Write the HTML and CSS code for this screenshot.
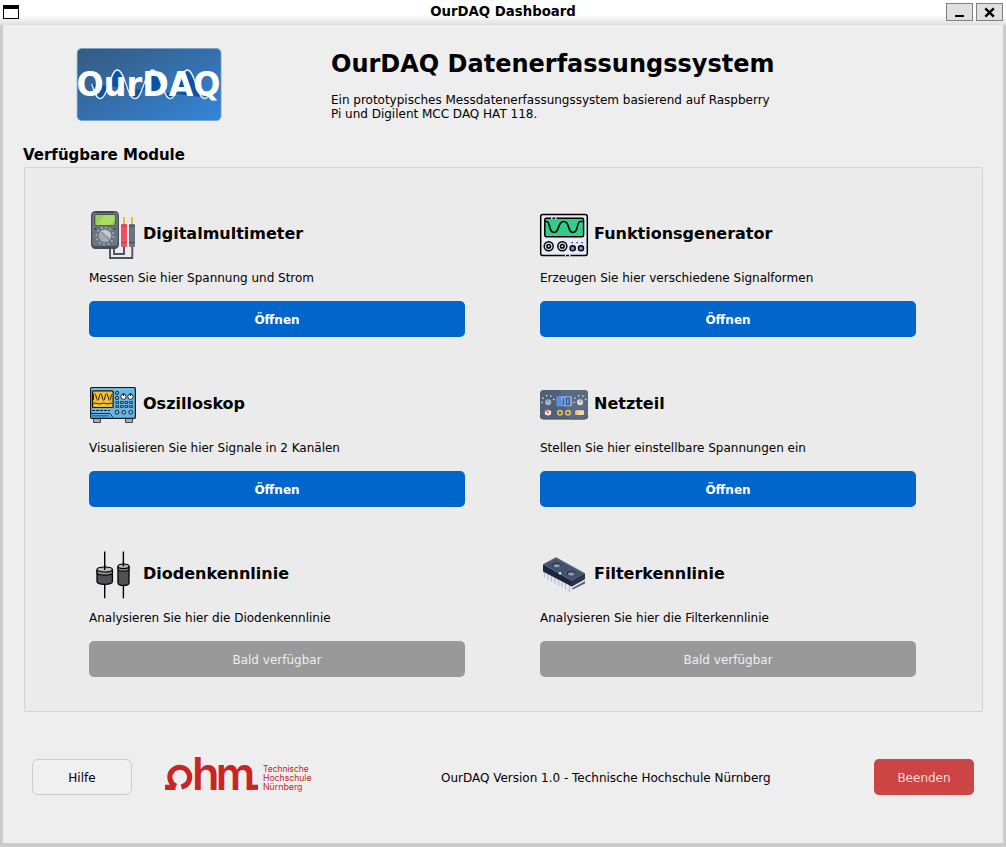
FILE: index.html
```html
<!DOCTYPE html>
<html lang="de">
<head>
<meta charset="utf-8">
<title>OurDAQ Dashboard</title>
<link rel="stylesheet" href="styles.css">
</head>
<body>
<div class="window">
  <header class="titlebar">
    <span class="win-icon"></span>
    <span class="win-title">OurDAQ Dashboard</span>
    <span class="win-controls">
      <button class="win-btn" aria-label="Minimieren"><svg width="25" height="16" viewBox="0 0 25 16"><path d="M8 12h9" stroke="#000" stroke-width="2"/></svg></button>
      <button class="win-btn" aria-label="Schließen"><svg width="25" height="16" viewBox="0 0 25 16"><path d="M8.300 4.300l8.500 8.400M16.800 4.300l-8.500 8.400" stroke="#000" stroke-width="2.400"/></svg></button>
    </span>
  </header>
  <main class="content">
    <section class="intro">
      <svg class="logo" width="145" height="73" viewBox="0 0 145 73">
        <defs><linearGradient id="lg" x1="0" y1="0" x2="1" y2="1"><stop offset="0" stop-color="#345a80"/><stop offset="1" stop-color="#3485d8"/></linearGradient></defs>
        <rect x=".2" y=".5" width="143.800" height="72" rx="4.500" fill="url(#lg)" stroke="#74a0c8" stroke-width=".8"/>
        <path d="M14.700 36C17 42 19 50.700 23 50.700C31 50.700 33 22 40.300 22C48 22 50 50.700 58 50.700C66 50.700 68 22 75.700 22C83 22 86 50.700 93 50.700C101 50.700 103 22 110.300 22C118 22 120 50.700 127.500 50.700L125 49L14.700 36Z" fill="#0a52a3"/>
        <path d="M14.700 36C17 42 19 50.700 23 50.700C31 50.700 33 22 40.300 22C48 22 50 50.700 58 50.700C66 50.700 68 22 75.700 22C83 22 86 50.700 93 50.700C101 50.700 103 22 110.300 22C118 22 120 50.700 127.500 50.700C130 50.700 131 49 132 47" fill="none" stroke="#e3edf6" stroke-width="1.300"/>
        <text class="logo-word" x="-.5" y="47.500" textLength="144" lengthAdjust="spacingAndGlyphs">OurDAQ</text>
      </svg>
      <div class="intro-text">
        <h1>OurDAQ Datenerfassungssystem</h1>
        <p>Ein prototypisches Messdatenerfassungssystem basierend auf Raspberry<br>Pi und Digilent MCC DAQ HAT 118.</p>
      </div>
    </section>
    <h2>Verfügbare Module</h2>
    <section class="modules">
      <article class="module">
        <div class="module-head">
          <svg width="48" height="48" viewBox="0 0 48 48">
            <path d="M21 38v10h22.300V37M25 38v6h10V37" fill="none" stroke="#4b545f" stroke-width="1.900"/>
            <rect x="2" y="1" width="28" height="38" rx="4.500" fill="#464e59"/>
            <rect x="3.200" y="2.500" width="25.600" height="33.500" rx="3" fill="#6b7480"/>
            <rect x="8" y="1.500" width="16" height="1.500" fill="#3d4650"/>
            <rect x="5.500" y="4.200" width="21" height="11.300" rx=".8" fill="#3f4852"/>
            <rect x="6.300" y="5" width="19.400" height="10" fill="#9bcf53"/>
            <path d="M16 5h9.700v6L20 15H8z" fill="#acdc65"/>
            <circle cx="6.500" cy="19" r="1" fill="#363f49"/><circle cx="25.700" cy="19" r="1" fill="#363f49"/>
            <circle cx="16" cy="26" r="8.500" fill="none" stroke="#b0b6bd" stroke-width="1.700" stroke-dasharray="1.700 2.750"/>
            <circle cx="16" cy="26" r="6.200" fill="#a3acb5"/><path d="M11.500 21.700a6.200 6.200 0 0 1 10.300 6z" fill="#c4cacf"/><path d="M12.500 22l7.500 7.700" stroke="#8a949f" stroke-width="1.300"/>
            <path d="M35 7v7M43 7v7" stroke="#ecb942" stroke-width="2"/>
            <rect x="32" y="14" width="6" height="23" rx="1" fill="#ee5262"/><path d="M32 16h6M32 32.500h6" stroke="#c83c51" stroke-width="1.200"/>
            <rect x="40" y="14" width="6" height="23" rx="1" fill="#6b7480"/><path d="M40 16h6M40 32.500h6" stroke="#444e59" stroke-width="1.200"/>
          </svg>
          <h3>Digitalmultimeter</h3>
        </div>
        <p>Messen Sie hier Spannung und Strom</p>
        <button class="open">Öffnen</button>
      </article>
      <article class="module">
        <div class="module-head">
          <svg width="48" height="48" viewBox="0 0 48 48">
            <rect x=".7" y="4.600" width="46.600" height="41" rx="2" fill="#e7ecf8" stroke="#000" stroke-width="1.500"/>
            <path d="M25 45.600h1M29 45.600h1.500" stroke="#e7ecf8" stroke-width="2"/>
            <rect x="4.800" y="8.300" width="38.800" height="18.500" rx="1.500" fill="#30ce8a" stroke="#000" stroke-width="1.500"/>
            <path d="M11 8.300h1.500M15 8.300h1.500" stroke="#e7ecf8" stroke-width="1.600"/>
            <path d="M5 11.500h1.500c4.500 0 1.500 11 7.500 11s3-11 9.700-11 3.300 11 9.300 11 3-11 7.500-11h3" fill="none" stroke="#000" stroke-width="1.700"/>
            <g fill="#dce2ee" stroke="#000" stroke-width="1.500"><circle cx="8.700" cy="36.300" r="4.500"/><circle cx="22.300" cy="36.300" r="4.500"/><circle cx="8.700" cy="36.300" r="1.800"/><circle cx="22.300" cy="36.300" r="1.800"/></g>
            <g fill="#7191e5" stroke="#000" stroke-width="1.400"><circle cx="32.700" cy="38.300" r="2.600"/><circle cx="41" cy="38.300" r="2.600"/></g>
            <path d="M31.500 32.700h1.200M36.500 32.700h1.200M41.500 32.700h1.200" stroke="#000" stroke-width="1.200"/>
          </svg>
          <h3>Funktionsgenerator</h3>
        </div>
        <p>Erzeugen Sie hier verschiedene Signalformen</p>
        <button class="open">Öffnen</button>
      </article>
      <article class="module">
        <div class="module-head">
          <svg width="48" height="48" viewBox="0 0 48 48">
            <path d="M4.500 38h7v4.500h-7zM36.500 38h7v4.500h-7z" fill="#a8acae" stroke="#414447"/>
            <rect x="1.600" y="7.600" width="44.800" height="30.700" rx="1" fill="#64b7e6" stroke="#111c24" stroke-width="1.200"/>
            <path d="M2.500 9h42" stroke="#92d3f1"/>
            <rect x="3.600" y="10.800" width="20.500" height="16.700" rx="1" fill="#f3c03c" stroke="#17140c" stroke-width="1.200"/>
            <path d="M4.500 20V14.500q1-2 2 0l1.500 5q.8 1.500 1.500 0l1.300-5q.9-2 1.800 0l1.300 5q.8 1.500 1.500 0l1.300-5q.9-2 1.800 0l1.300 5q.8 1.500 1.500 0l1.300-5M4.500 23.500q2-1 4 0t4 0 4 0 4 0 3 0" fill="none" stroke="#2a1d0c" stroke-width="1"/>
            <g fill="#fff" stroke="#111c24"><circle cx="34.500" cy="16.700" r="2.700"/><circle cx="41.500" cy="16.700" r="2.700"/></g>
            <path d="M34.500 13v3M41.500 13v3" stroke="#111c24" stroke-width="1"/>
            <g fill="#88bed9" stroke="#152631" stroke-width="1"><circle cx="28" cy="13" r="1.600"/><circle cx="28" cy="18" r="1.600"/><circle cx="28" cy="32.300" r="1.900"/><circle cx="34.800" cy="32.300" r="1.900"/><circle cx="41.700" cy="32.300" r="1.900"/></g>
            <path d="M26.500 22.500h18M26.500 26.500h18" stroke="#172a36" stroke-width="2.400" stroke-dasharray="3.500 1.100"/>
            <path d="M27.400 22.500h17M27.400 26.500h17" stroke="#9acce4" stroke-width=".8" stroke-dasharray="1.700 2.900"/>
            <path d="M3 30.500h18" stroke="#15242e" stroke-width="1.200" stroke-dasharray="3 1"/>
            <path d="M2 33.500h19l3 4" fill="none" stroke="#15242e"/><path d="M3 35.800h17" stroke="#326a8b" stroke-width="1.500"/>
          </svg>
          <h3>Oszilloskop</h3>
        </div>
        <p>Visualisieren Sie hier Signale in 2 Kanälen</p>
        <button class="open">Öffnen</button>
      </article>
      <article class="module">
        <div class="module-head">
          <svg width="48" height="48" viewBox="0 0 48 48">
            <rect x="0" y="10" width="48" height="29.300" rx="3.500" fill="#506079"/>
            <path d="M20 10h24.500a3.500 3.500 0 0 1 3.500 3.500v22.300a3.500 3.500 0 0 1-3.500 3.500H30z" fill="#5c6b84"/>
            <path d="M0 35.500a3.500 3.500 0 0 0 3.500 3.600h41a3.500 3.500 0 0 0 3.500-3.600" fill="none" stroke="#46536b" stroke-width=".8"/>
            <rect x="16.700" y="16.300" width="15.300" height="10" rx=".8" fill="#80abef"/><path d="M17.500 16.300h3l3 10h-6.800v-9z" fill="#5e8dde"/>
            <path d="M23.500 18v6.800M26.500 18.300h2.700v6h-2.700z" fill="none" stroke="#3b527a" stroke-width="1.300"/>
            <g fill="none" stroke="#e4e9ee" stroke-width="1.400" stroke-dasharray="1.300 3.100"><path d="M2.200 23a6 6 0 1 1 11.600 0"/><path d="M34.200 23a6 6 0 1 1 11.600 0"/></g>
            <circle cx="8.200" cy="22.300" r="3" fill="#a6b4c3"/><circle cx="40" cy="22.300" r="3" fill="#d5dce2"/>
            <path d="M8.200 22.300l-1-2.500M40 22.300l1-2.500" stroke="#7b899a"/>
            <ellipse cx="8" cy="32.700" rx="3.200" ry="2.700" fill="#efe9e5"/><path d="M5.200 29.700l3.500 3.500" stroke="#e66a50" stroke-width="1.700"/>
            <g fill="none" stroke="#e5c45f" stroke-width="1.500"><circle cx="20" cy="32.700" r="2.300"/><circle cx="28" cy="32.700" r="2.300"/></g>
            <rect x="35.500" y="30.300" width="8.500" height="4.600" rx=".8" fill="#f6dda0"/><path d="M35.500 31h3v4h-3z" fill="#e9c878"/>
          </svg>
          <h3>Netzteil</h3>
        </div>
        <p>Stellen Sie hier einstellbare Spannungen ein</p>
        <button class="open">Öffnen</button>
      </article>
      <article class="module">
        <div class="module-head">
          <svg width="48" height="48" viewBox="0 0 48 48">
            <path d="M15.700 1.500V20M15.700 33v15.200M34.400 1.500V16M34.400 35v13.200" stroke="#000" stroke-width="1.400"/>
            <path d="M8 20v11.500c0 3.700 15.400 3.700 15.400 0V20" fill="#505254" stroke="#000" stroke-width="1.300"/>
            <path d="M8 20v2.500c0 3.500 15.400 3.500 15.400 0v-2.500" fill="#8b8d8f" stroke="#000" stroke-width="1.100"/>
            <ellipse cx="15.700" cy="19.500" rx="7.700" ry="2.500" fill="#b9bbbb" stroke="#000" stroke-width="1.200"/>
            <path d="M29 16.500v16.300c0 3.600 11 3.600 11 0V16.500" fill="#505254" stroke="#000" stroke-width="1.300"/>
            <path d="M29 16.500v2.500c0 3 11 3 11 0v-2.500" fill="#8b8d8f" stroke="#000" stroke-width="1.100"/>
            <ellipse cx="34.500" cy="16.300" rx="5.500" ry="2.300" fill="#b9bbbb" stroke="#000" stroke-width="1.200"/>
            <path d="M15.700 15v5M34.400 12v4.500" stroke="#000" stroke-width="1.400"/>
          </svg>
          <h3>Diodenkennlinie</h3>
        </div>
        <p>Analysieren Sie hier die Diodenkennlinie</p>
        <button class="open soon">Bald verfügbar</button>
      </article>
      <article class="module">
        <div class="module-head">
          <svg width="48" height="48" viewBox="0 0 48 48">
            <path d="M4.500 21v6.500M8 23v6.500M11.500 25v6.500M15 27v6.500M18.500 29v6.500M22 31v6.500M25.500 33v6.500M29.500 35v7" stroke="#b5bfd2" stroke-width="1.400"/>
            <path d="M31.700 38.500L45 31v2.500L33 39.500z" fill="#59657a"/>
            <path d="M3 14.300l28.700 16.400L45 23.300V29l-13.300 7.500L3 21.500z" fill="#1b2739"/>
            <path d="M31.700 30.700L45 23.300V29l-13.300 7.500z" fill="#27364d"/>
            <path d="M3 14.300L16 7.300l29 16-13.300 7.400z" fill="#43536d"/>
            <path d="M4 14.300L16 8l27.500 15.300" fill="none" stroke="#68768d" stroke-width=".8"/>
            <ellipse cx="16.500" cy="15.200" rx="3.900" ry="2.300" fill="#1d2a3e"/><ellipse cx="16.700" cy="15.700" rx="3.200" ry="1.700" fill="#8e9aab"/>
            <ellipse cx="31" cy="23.500" rx="3.900" ry="2.300" fill="#1d2a3e"/><ellipse cx="31.200" cy="24" rx="3.200" ry="1.700" fill="#8e9aab"/>
            <circle cx="20" cy="23.300" r="1.200" fill="#f0f3f8"/>
            <path d="M32 37.300l12.500-7" stroke="#d7dde6" stroke-width=".7"/>
          </svg>
          <h3>Filterkennlinie</h3>
        </div>
        <p>Analysieren Sie hier die Filterkennlinie</p>
        <button class="open soon">Bald verfügbar</button>
      </article>
    </section>
    <footer class="footer">
      <button class="help">Hilfe</button>
      <svg class="ohm" width="150" height="40" viewBox="0 0 150 40">
        <path d="M0 30.300H10.500M11 29.300A9.900 9.900 0 1 1 18 29.500L16.300 30" fill="none" stroke="#c92525" stroke-width="5.200"/>
        <path d="M84.500 27.700h8.500v5.200h-8.500z" fill="#c92525"/>
        <g class="ohm-word"><text x="27" y="32.800">h</text><text x="50.700" y="32.800" textLength="39.500" lengthAdjust="spacingAndGlyphs">m</text></g>
        <g class="ohm-name">
          <text x="98" y="15.200" textLength="45.700" lengthAdjust="spacingAndGlyphs">Technische</text>
          <text x="98" y="24" textLength="48.500" lengthAdjust="spacingAndGlyphs">Hochschule</text>
          <text x="98" y="33" textLength="39.500" lengthAdjust="spacingAndGlyphs">Nürnberg</text>
        </g>
      </svg>
      <span class="version">OurDAQ Version 1.0 - Technische Hochschule Nürnberg</span>
      <button class="quit">Beenden</button>
    </footer>
  </main>
</div>
</body>
</html>
```
FILE: styles.css
```css
* { box-sizing: border-box; }
body { margin: 0; font: 12px/14px "DejaVu Sans", sans-serif; color: #000; }
h1, h2, h3, p { margin: 0; }
button { font: inherit; padding: 0; }
svg { display: block; flex: none; overflow: visible; }
.window { width: 1006px; height: 847px; display: flex; flex-direction: column; background: #ccc; overflow: hidden; }
.titlebar { height: 25px; flex: none; display: grid; grid-template-columns: 60px 1fr 60px; padding: 0 3px; background: linear-gradient(#fff 15px, #dfdfdf 25px); }
.win-icon { width: 16px; height: 14px; margin-top: 5px; border: 1px solid #000; border-top-width: 4px; background: #fff; }
.win-title { text-align: center; font-weight: bold; font-size: 13.3px; line-height: 23px; }
.win-controls { display: flex; gap: 3px; justify-content: flex-end; padding-top: 3px; }
.win-btn { width: 27px; height: 18px; border: 1px solid #808080; background: #e0e0e0; }
.content { flex: 1; margin: 0 3px 4px; background: #eee; padding: 23px 20px 0; display: flex; flex-direction: column; }
.intro { display: flex; height: 98px; padding-left: 54px; gap: 109px; }
.logo-word { font: bold 33px "DejaVu Sans", sans-serif; fill: #fff; }
h1 { font-size: 24px; line-height: 32px; white-space: nowrap; }
.intro-text p { margin-top: 13px; white-space: nowrap; }
p, .version { letter-spacing: -.01px; }
h2 { font-size: 15px; line-height: 18px; height: 21px; }
.modules { flex: none; width: 959px; height: 545px; margin-left: 1px; border: 1px solid #d4d4d4; border-radius: 2px; background: #ebebeb; box-shadow: inset 0 0 1px #ddd; display: grid; grid-template-columns: 376px 376px; grid-auto-rows: 127px; column-gap: 75px; row-gap: 43px; padding: 42px 0 0 64px; }
.module { display: flex; flex-direction: column; }
.module-head { display: flex; align-items: center; gap: 6px; height: 48px; margin-bottom: 13px; }
h3 { font-size: 16px; line-height: 20px; }
.open { width: 100%; height: 36px; margin-top: auto; padding-top: 2px; border: 0; border-radius: 5px; background: #06c; color: #fff; font-weight: bold; }
.open.soon { background: #999; color: #eee; font-weight: normal; }
.footer { display: flex; align-items: center; height: 36px; margin: 47px 9px 0; }
.help { width: 100px; height: 36px; padding-top: 2px; border: 1px solid #ccc; border-radius: 6px; background: #f0f0f0; color: #000; }
.ohm { margin-left: 33px; }
.ohm-word { font: 600 45px Inter, sans-serif; fill: #c92525; }
.ohm-name { font: 8.300px Inter, sans-serif; fill: #c92525; }
.version { margin-left: 126px; padding-top: 2px; white-space: nowrap; }
.quit { width: 100px; height: 36px; padding-top: 2px; margin-left: auto; border: 0; border-radius: 5px; background: #c44; color: #f7dede; }
```
